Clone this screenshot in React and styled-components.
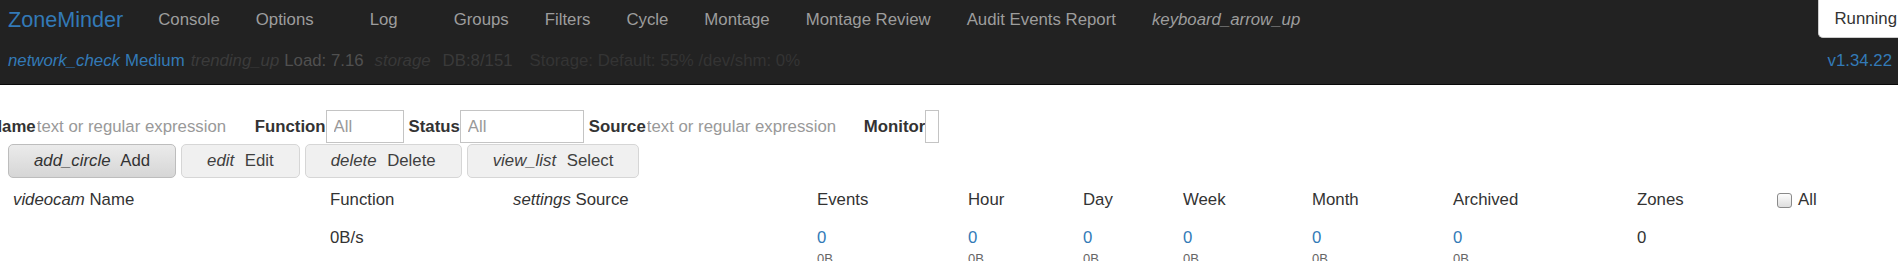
import React from 'react'
import styled, { createGlobalStyle } from 'styled-components'

const GlobalStyle = createGlobalStyle`
  html, body {
    margin: 0;
    padding: 0;
    background: #fff;
    overflow: hidden;
  }

  body {
    font-family: "Liberation Sans", Arial, sans-serif;
    font-size: 16.8px;
    line-height: 1.42857;
    color: #333;
  }

  * {
    box-sizing: border-box;
  }
`

const Navbar = styled.nav`
  display: flex;
  flex-direction: column;
  background: #222;
  border-bottom: 1px solid #080808;
  overflow: hidden;
`

const NavTop = styled.div`
  display: flex;
  align-items: center;
  height: 40px;
  padding-left: 8px;
`

const Brand = styled.a`
  color: #337ab7;
  font-size: 21.6px;
  margin-right: 17px;
  text-decoration: none;
`

const NavLink = styled.a`
  padding: 0 ${({ $wide }) => ($wide ? '38px' : '18px')};
  color: #9d9d9d;
  font-style: ${({ $icon }) => ($icon ? 'italic' : 'normal')};
  text-decoration: none;
  white-space: nowrap;
`

const Spacer = styled.div`
  flex: 1;
`

const StateButton = styled.button`
  align-self: flex-start;
  height: 38px;
  margin-right: -15px;
  padding: 0 15px;
  background: #fff;
  border: 1px solid #ccc;
  border-top: none;
  border-radius: 0 0 0 5px;
  color: #333;
  font: inherit;
`

const NavBottom = styled.div`
  display: flex;
  align-items: center;
  height: 44px;
  padding: 0 6px 2px 8px;
  white-space: nowrap;
`

const Status = styled.span`
  margin-left: ${({ $gap }) => $gap || 0}px;
  color: ${({ $color }) => $color};
`

const Glyph = styled.i`
  margin-right: ${({ $space }) => $space || 0}px;
  color: ${({ $color }) => $color || 'inherit'};
`

const Version = styled.span`
  margin-left: auto;
  color: #337ab7;
`

const Content = styled.main`
  padding-top: 25px;
`

const FilterBar = styled.div`
  display: flex;
  align-items: center;
  height: 33px;
  margin-left: -10px;
  white-space: nowrap;
`

const Term = styled.span`
  display: flex;
  align-items: center;
  margin-right: 5px;
`

const TermLabel = styled.label`
  font-weight: bold;
  color: #333;
`

const TextInput = styled.input`
  width: ${({ $width }) => $width}px;
  height: 33px;
  padding: 0 0 0 ${({ $bare }) => ($bare ? '1px' : '7px')};
  border: ${({ $bare }) => ($bare ? 'none' : '1px solid #c4c4c4')};
  border-radius: 0;
  background: transparent;
  font: inherit;
  color: #555;
  outline: none;

  &::placeholder {
    color: #999;
  }
`

const ButtonBar = styled.div`
  display: flex;
  gap: 5px;
  margin-top: 1px;
  padding-left: 8px;
`

const ActionButton = styled.button`
  height: 34px;
  padding: 0 25px;
  border: 1px solid ${({ $disabled }) => ($disabled ? '#d6d6d6' : '#bdbdbd')};
  border-radius: 5px;
  background: ${({ $disabled }) =>
    $disabled ? '#f0f0f0' : 'linear-gradient(to bottom, #ebebeb, #d6d6d6)'};
  color: ${({ $disabled }) => ($disabled ? '#3f3f3f' : '#333')};
  font: inherit;
  white-space: nowrap;
`

const Table = styled.div`
  margin-top: 3px;
  padding-left: 13px;
`

const Row = styled.div`
  display: grid;
  grid-template-columns: 317px 183px 304px 151px 115px 100px 129px 141px 184px 140px auto;
  align-items: ${({ $head }) => ($head ? 'center' : 'start')};
  height: ${({ $head }) => ($head ? '38px' : 'auto')};
  padding-top: ${({ $head }) => ($head ? 0 : 9)}px;
  line-height: 20px;
`

const Cell = styled.div`
  display: flex;
  flex-direction: column;
  white-space: nowrap;
`

const Count = styled.a`
  color: ${({ $plain }) => ($plain ? '#333' : '#337ab7')};
  text-decoration: none;
`

const Size = styled.span`
  margin-top: 1px;
  font-size: 13px;
  color: #666;
`

const CheckLabel = styled.label`
  display: flex;
  align-items: center;
  gap: 6px;
`

const Check = styled.input`
  appearance: none;
  width: 15px;
  height: 15px;
  margin: 0;
  border: 1px solid #8a8a8a;
  border-radius: 3px;
  background: linear-gradient(to bottom, #fdfdfd, #dedede);
`

const actions = [
  { icon: 'add_circle', label: 'Add' },
  { icon: 'edit', label: 'Edit', disabled: true },
  { icon: 'delete', label: 'Delete', disabled: true },
  { icon: 'view_list', label: 'Select', disabled: true },
]

const navLinks = [
  { label: 'Console' },
  { label: 'Options' },
  { label: 'Log', wide: true },
  { label: 'Groups' },
  { label: 'Filters' },
  { label: 'Cycle' },
  { label: 'Montage' },
  { label: 'Montage Review' },
  { label: 'Audit Events Report' },
  { label: 'keyboard_arrow_up', icon: true },
]

const counts = ['Events', 'Hour', 'Day', 'Week', 'Month', 'Archived']

const App = () => {
  return (
    <>
      <GlobalStyle />
      <Navbar>
        <NavTop>
          <Brand>ZoneMinder</Brand>
          {navLinks.map((link) => (
            <NavLink key={link.label} $wide={link.wide} $icon={link.icon}>
              {link.label}
            </NavLink>
          ))}
          <Spacer />
          <StateButton>Running</StateButton>
        </NavTop>
        <NavBottom>
          <Status $color="#337ab7">
            <Glyph $space={5}>network_check</Glyph>Medium
          </Status>
          <Status $color="#505050" $gap={6}>
            <Glyph $space={5} $color="#3b3b3b">
              trending_up
            </Glyph>
            Load: 7.16
          </Status>
          <Status $color="#3a3a3a" $gap={11}>
            <Glyph $space={12} $color="#383838">
              storage
            </Glyph>
            DB:8/151
          </Status>
          <Status $color="#343434" $gap={17}>
            Storage: Default: 55% /dev/shm: 0%
          </Status>
          <Version>v1.34.22</Version>
        </NavBottom>
      </Navbar>

      <Content>
        <FilterBar>
          <Term>
            <TermLabel>Name</TermLabel>
            <TextInput $bare $width={214} placeholder="text or regular expression" />
          </Term>
          <Term>
            <TermLabel>Function</TermLabel>
            <TextInput $width={78} placeholder="All" />
          </Term>
          <Term>
            <TermLabel>Status</TermLabel>
            <TextInput $width={124} placeholder="All" />
          </Term>
          <Term>
            <TermLabel>Source</TermLabel>
            <TextInput $bare $width={213} placeholder="text or regular expression" />
          </Term>
          <Term>
            <TermLabel>Monitor</TermLabel>
            <TextInput $width={14} />
          </Term>
        </FilterBar>

        <ButtonBar>
          {actions.map((action) => (
            <ActionButton key={action.label} $disabled={action.disabled}>
              <Glyph $space={6}>{action.icon}</Glyph> {action.label}
            </ActionButton>
          ))}
        </ButtonBar>

        <Table>
          <Row $head>
            <Cell>
              <span>
                <i>videocam</i> Name
              </span>
            </Cell>
            <Cell>Function</Cell>
            <Cell>
              <span>
                <i>settings</i> Source
              </span>
            </Cell>
            {counts.map((name) => (
              <Cell key={name}>{name}</Cell>
            ))}
            <Cell>Zones</Cell>
            <Cell>
              <CheckLabel>
                <Check type="checkbox" />
                All
              </CheckLabel>
            </Cell>
          </Row>
          <Row>
            <Cell />
            <Cell>0B/s</Cell>
            <Cell />
            {counts.map((name) => (
              <Cell key={name}>
                <Count>0</Count>
                <Size>0B</Size>
              </Cell>
            ))}
            <Cell>
              <Count $plain>0</Count>
            </Cell>
            <Cell />
          </Row>
        </Table>
      </Content>
    </>
  )
}

export default App
